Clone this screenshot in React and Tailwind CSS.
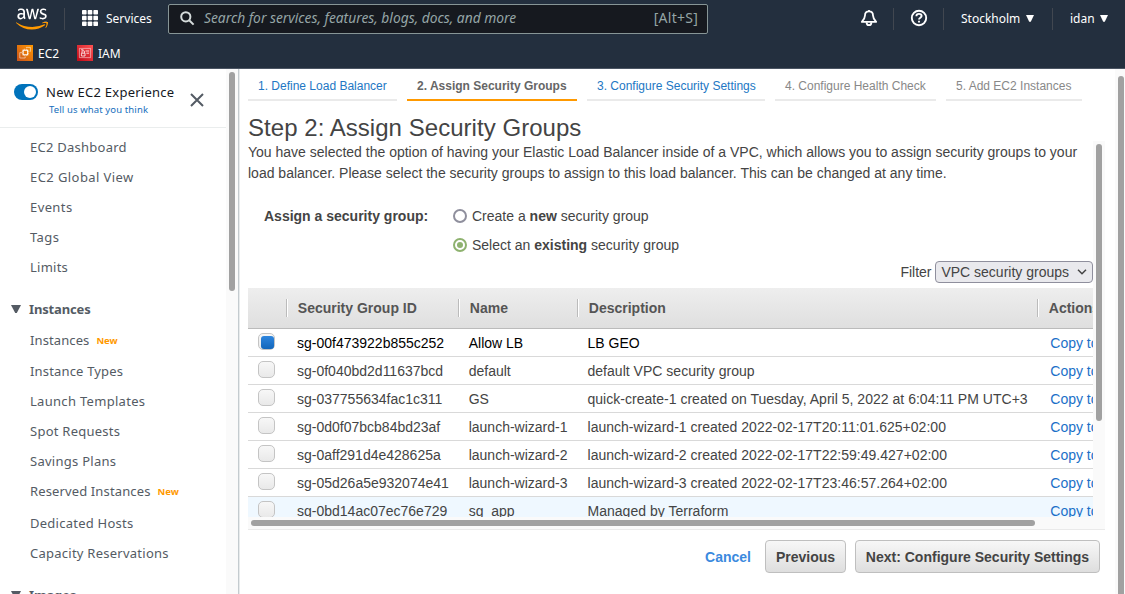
import React from "react";
import { FaAws } from "react-icons/fa";

const ember = "font-['Noto_Sans','Open_Sans',sans-serif]";

function Divider() {
  return <div className="h-[22px] w-px bg-[#414750]" />;
}

function Caret() {
  return (
    <svg className="-mt-px" width="8" height="7" viewBox="0 0 8 7" fill="#fff">
      <path d="M0 0H8L4.8 6.8H3.2Z" />
    </svg>
  );
}

function AwsLogo() {
  return (
    <div className="flex h-[26px] w-[33px] items-center justify-center">
      <svg width="0" height="0" className="absolute">
        <linearGradient id="awsFill" gradientUnits="userSpaceOnUse" x1="0" y1="0" x2="0" y2="512">
          <stop offset="0.605" stopColor="#fff" />
          <stop offset="0.605" stopColor="#ff9900" />
        </linearGradient>
      </svg>
      <FaAws size={32} className="h-[28px] w-[32px]" fill="url(#awsFill)" preserveAspectRatio="none" />
    </div>
  );
}

function TopBar() {
  return (
    <header className={`h-[69px] shrink-0 border-b border-[#4b5563] bg-[#232f3e] text-white ${ember}`}>
      <div className="flex h-[37px] items-center">
        <div className="ml-[15px] w-[33px]">
          <AwsLogo />
        </div>
        <div className="ml-4">
          <Divider />
        </div>
        <svg className="-mt-px ml-[17px]" width="16" height="16" viewBox="0 0 16 16" fill="#fff">
          {[0, 5.7, 11.4].map((y) =>
            [0, 5.7, 11.4].map((x) => <rect key={`${x}-${y}`} x={x} y={y} width="4.6" height="4.6" rx="0.8" />)
          )}
        </svg>
        <div className="ml-2 mt-px w-[62px] text-[12px] leading-4">Services</div>
        <div className="flex h-[30px] w-[540px] items-center rounded-[2px] border border-[#879596] bg-[#16191f] text-[#95a5a6]">
          <svg className="ml-[11px]" width="15" height="15" viewBox="0 0 15 15" fill="none" stroke="#d5dbdb" strokeWidth="2">
            <circle cx="5.8" cy="5.8" r="4.6" />
            <path d="M9.2 9.2L13.6 13.6" />
          </svg>
          <div className="-mt-px ml-[9px] flex-1 text-[13.8px] italic leading-4">
            Search for services, features, blogs, docs, and more
          </div>
          <div className="-mt-px mr-[9px] text-[14px] leading-4 tracking-[0.25px]">[Alt+S]</div>
        </div>
        <svg className="-mt-px ml-[152px]" width="18" height="18" viewBox="0 0 18 18" fill="none" stroke="#fff" strokeWidth="1.8">
          <path d="M9 1V2.4M9 2.4C6.2 2.4 5 4.4 5 6.6C5 9.6 4 10.6 1.8 12.8H16.2C14 10.6 13 9.6 13 6.6C13 4.4 11.8 2.4 9 2.4Z" strokeLinejoin="round" />
          <path d="M6.6 13.2C6.6 15 7.6 16.2 9 16.2S11.4 15 11.4 13.2" />
        </svg>
        <div className="ml-[15px]">
          <Divider />
        </div>
        <svg className="-mt-px ml-4" width="18" height="18" viewBox="0 0 18 18" fill="none" stroke="#fff" strokeWidth="1.9">
          <circle cx="9" cy="9" r="7.2" />
          <path d="M6.4 7.2C6.4 5.7 7.4 4.9 9 4.9S11.6 5.8 11.6 7.1C11.6 8.7 9 8.7 9 10.6" />
          <path d="M9 11.8V13.6" />
        </svg>
        <div className="ml-[15px]">
          <Divider />
        </div>
        <div className="ml-[17px] mt-px w-[65px] text-[12px] leading-4">Stockholm</div>
        <Caret />
        <div className="ml-[18px]">
          <Divider />
        </div>
        <div className="ml-[17px] mt-px w-[30px] text-[12px] leading-4">idan</div>
        <Caret />
      </div>
      <div className="flex h-8 items-center text-[12px] leading-4">
        <svg className="ml-[17px]" width="16" height="16" viewBox="0 0 16 16" fill="none" stroke="#fff" strokeWidth="0.8">
          <defs>
            <linearGradient id="ec2" x1="0" y1="1" x2="1" y2="0">
              <stop offset="0" stopColor="#c8511b" />
              <stop offset="1" stopColor="#ff9900" />
            </linearGradient>
          </defs>
          <rect width="16" height="16" fill="url(#ec2)" stroke="none" />
          <rect x="6.1" y="5.2" width="4.6" height="4.6" strokeWidth="1.1" />
          <path d="M7.4 5V3.6M9.4 5V3.6M7.4 11.2V10M9.4 11.2V10M4.8 6.4H6M4.8 8.4H6M10.8 6.4H12M10.8 8.4H12" opacity="0.5" />
          <path d="M5 7.6H2.8V13H8.2V11.4M9.4 3V2.4H13.4V6.4H12.6" opacity="0.65" />
        </svg>
        <div className="ml-[5px] mt-0.5 w-[39px]">EC2</div>
        <svg width="16" height="16" viewBox="0 0 16 16" fill="none" stroke="#fff" strokeWidth="0.8">
          <defs>
            <linearGradient id="iam" x1="0" y1="1" x2="1" y2="0">
              <stop offset="0" stopColor="#bd0816" />
              <stop offset="1" stopColor="#ff5252" />
            </linearGradient>
          </defs>
          <rect width="16" height="16" fill="url(#iam)" stroke="none" />
          <path d="M2.4 3.4H13.6V12.6H2.4Z" opacity="0.6" />
          <path d="M4.4 8.2H8V11H4.4ZM5 8V6.2C5 5.6 7.4 5.6 7.4 6.2V8M8.6 6H12M9.4 8.2H12M4 4.8H6.4" />
        </svg>
        <div className="ml-[5px] mt-0.5">IAM</div>
      </div>
    </header>
  );
}

function NavItem({ label, isNew, className = "h-[30px]", spacing = "tracking-[0.25px]" }) {
  return (
    <div className={`flex items-center pl-[30px] ${className}`}>
      <span className={spacing}>{label}</span>
      {isNew && <span className="ml-[7px] pt-0.5 text-[9.5px] font-bold text-[#ff9900]">New</span>}
    </div>
  );
}

function NavHeading({ label }) {
  return (
    <div className="flex h-[30px] items-center pl-[11px] font-bold">
      <svg width="10" height="8" viewBox="0 0 10 8" fill="#545b64">
        <path d="M0 0H10L5.8 8H4.2Z" />
      </svg>
      <span className="ml-2 tracking-[-0.15px]">{label}</span>
    </div>
  );
}

function Sidebar() {
  return (
    <aside className={`flex h-full w-[240px] shrink-0 overflow-hidden ${ember}`}>
      <div className="w-[226px] shrink-0">
        <div className="flex h-[59px] border-b border-[#eaeded]">
          <div className="ml-[14px] mt-[15px] flex h-4 w-6 items-center justify-end rounded-full bg-[#0073bb] pr-0.5">
            <div className="h-3 w-3 rounded-full bg-white" />
          </div>
          <div className="ml-2 mt-[14px] w-[144px] whitespace-nowrap">
            <div className="text-[13px] leading-[18px] tracking-[0.25px] text-[#16191f]">New EC2 Experience</div>
            <div className="ml-[3px] mt-px text-[9.5px] leading-4 tracking-[0.12px] text-[#146ebd]">Tell us what you think</div>
          </div>
          <svg className="mt-[24px]" width="14" height="14" viewBox="0 0 14 14" stroke="#545b64" strokeWidth="2">
            <path d="M1 1L13 13M13 1L1 13" />
          </svg>
        </div>
        <nav className="whitespace-nowrap pt-1 text-[13px] leading-5 text-[#545b64]">
          <NavItem label="EC2 Dashboard" />
          <NavItem label="EC2 Global View" spacing="tracking-[0.42px]" />
          <NavItem label="Events" spacing="tracking-[0.4px]" />
          <NavItem label="Tags" spacing="tracking-[0.4px]" />
          <NavItem label="Limits" />
          <div className="h-3" />
          <NavHeading label="Instances" />
          <NavItem label="Instances" isNew spacing="tracking-[0.1px]" className="h-[32px]" />
          <NavItem label="Instance Types" spacing="tracking-[0.17px]" />
          <NavItem label="Launch Templates" spacing="tracking-[0.3px]" />
          <NavItem label="Spot Requests" />
          <NavItem label="Savings Plans" spacing="tracking-[0.27px]" />
          <NavItem label="Reserved Instances" isNew spacing="tracking-[0.13px]" />
          <NavItem label="Dedicated Hosts" className="h-[34px]" />
          <NavItem label="Capacity Reservations" className="h-[26px]" />
          <div className="h-[14px]" />
          <NavHeading label="Images" />
        </nav>
      </div>
      <div className="w-3 shrink-0 bg-[#fafafa] pl-[3px] pt-[3px]">
        <div className="h-[219px] w-1.5 rounded-full bg-[#a1a1a1]" />
      </div>
      <div className="w-px bg-[#c4cbcf]" />
      <div className="w-px bg-[#e8ebec]" />
    </aside>
  );
}

const steps = [
  { label: "1. Define Load Balancer", style: "w-[149px] border-[#eaeaea] text-[#2277c4]" },
  { label: "2. Assign Security Groups", style: "w-[170px] border-[#ff9900] font-bold text-[#666]" },
  { label: "3. Configure Security Settings", style: "w-[178px] border-[#eaeaea] text-[#2277c4]" },
  { label: "4. Configure Health Check", style: "w-[161px] border-[#eaeaea] text-[#888]" },
  { label: "5. Add EC2 Instances", style: "w-[136px] border-[#eaeaea] text-[#888]" },
];

const groups = [
  { id: "sg-00f473922b855c252", name: "Allow LB", description: "LB GEO", checked: true },
  { id: "sg-0f040bd2d11637bcd", name: "default", description: "default VPC security group" },
  { id: "sg-037755634fac1c311", name: "GS", description: "quick-create-1 created on Tuesday, April 5, 2022 at 6:04:11 PM UTC+3" },
  { id: "sg-0d0f07bcb84bd23af", name: "launch-wizard-1", description: "launch-wizard-1 created 2022-02-17T20:11:01.625+02:00" },
  { id: "sg-0aff291d4e428625a", name: "launch-wizard-2", description: "launch-wizard-2 created 2022-02-17T22:59:49.427+02:00" },
  { id: "sg-05d26a5e932074e41", name: "launch-wizard-3", description: "launch-wizard-3 created 2022-02-17T23:46:57.264+02:00" },
  { id: "sg-0bd14ac07ec76e729", name: "sg_app", description: "Managed by Terraform", hovered: true },
];

const columns = "grid grid-cols-[38px_172px_119px_460px_120px]";

function HeadCell({ children }) {
  return (
    <div className="flex h-[18px] items-center border-l border-[#bbb]">
      <div className="h-[18px] w-px bg-white" />
      <span className="pl-[9.8px]">{children}</span>
    </div>
  );
}

function Checkbox({ checked }) {
  return (
    <div className="ml-[10px] mt-1 h-[17px] w-[17px] rounded-[5px] border border-[#c4c4c4] bg-linear-to-b from-[#f7f7f7] to-[#e9e9e9] pl-0.5 pt-0.5">
      {checked && <div className="h-[13px] w-[13px] rounded-[3px] bg-linear-to-b from-[#2e86de] to-[#1166bb]" />}
    </div>
  );
}

function GroupTable() {
  return (
    <div className="h-[229px] w-[845px] overflow-hidden whitespace-nowrap">
      <div className={`${columns} h-[41px] w-[909px] items-center border-b border-[#bbb] bg-linear-to-b from-[#eeeeee] to-[#dfdfdf] font-bold text-[#555]`}>
        <div />
        <HeadCell>Security Group ID</HeadCell>
        <HeadCell>Name</HeadCell>
        <HeadCell>Description</HeadCell>
        <HeadCell>Actions</HeadCell>
      </div>
      {groups.map((g) => (
        <div
          key={g.id}
          className={`${columns} h-7 w-[909px] border-b border-[#d9d9d9] leading-7 ${g.checked ? "text-black" : "text-[#444]"} ${g.hovered ? "bg-[#eff8ff]" : ""}`}
        >
          <Checkbox checked={g.checked} />
          <span className="pl-[11px]">{g.id}</span>
          <span className="pl-[10.7px]">{g.name}</span>
          <span className="pl-[10.5px] tracking-[0.02px]">{g.description}</span>
          <span className="pl-[13.3px] text-[#1a70c8]">Copy to new</span>
        </div>
      ))}
    </div>
  );
}

function Radio({ checked }) {
  return checked ? (
    <div className="mb-0.5 flex h-[14px] w-[14px] items-center justify-center rounded-full border-2 border-[#8eb26f]">
      <div className="h-1.5 w-1.5 rounded-full bg-[#8eb26f]" />
    </div>
  ) : (
    <div className="mb-0.5 h-[14px] w-[14px] rounded-full border-2 border-[#8f8f9d]" />
  );
}

function Wizard() {
  return (
    <main className="flex min-w-0 flex-1 flex-col pl-2 font-['Liberation_Sans',Arial,sans-serif] text-[14px] text-[#444]">
      <div className="flex h-8 shrink-0 gap-[10px] whitespace-nowrap text-[12px]">
        {steps.map((s) => (
          <div key={s.label} className={`border-b-2 pl-[10px] pt-[9px] leading-4 ${s.style}`}>
            {s.label}
          </div>
        ))}
      </div>
      <div className="flex h-[429px] w-[857px] shrink-0 border-b border-[#eaeaea]">
        <div className="w-[845px]">
          <h1 className="mt-[13px] h-7 text-[24px] leading-7 tracking-[0.04px]">Step 2: Assign Security Groups</h1>
          <p className="h-[42px] w-[845px] leading-[21px]">
            You have selected the option of having your Elastic Load Balancer inside of a VPC, which allows you to assign
            security groups to your load balancer. Please select the security groups to assign to this load balancer. This
            can be changed at any time.
          </p>
          <div className="flex pl-4 pt-[18px]">
            <div className="w-[189px] font-bold leading-[29px]">Assign a security group:</div>
            <div>
              <div className="flex h-[29px] items-center">
                <Radio />
                <span className="ml-[5px]">
                  Create a <b>new</b> security group
                </span>
              </div>
              <div className="flex h-[29px] items-center">
                <Radio checked />
                <span className="ml-[5px]">
                  Select an <b>existing</b> security group
                </span>
              </div>
            </div>
          </div>
          <div className="flex h-[28px] items-start justify-end pt-[1px]">
            <span className="mr-[3.5px] leading-[22px]">Filter</span>
            <div className="flex h-[22px] w-[158px] items-center rounded-[4px] border border-[#8f8f9d] bg-[#e9e9ed] pl-[5.4px]">
              <span className="flex-1 whitespace-nowrap leading-5">VPC security groups</span>
              <svg className="mr-[5px]" width="10" height="6" viewBox="0 0 10 6" fill="none" stroke="#444" strokeWidth="1.5">
                <path d="M1 0.8L5 4.8L9 0.8" />
              </svg>
            </div>
          </div>
          <GroupTable />
          <div className="h-3 bg-[#fafafa] pl-[3px] pt-[3px]">
            <div className="h-1.5 w-[784px] rounded-full bg-[#a1a1a1]" />
          </div>
        </div>
        <div className="mt-10 w-3 bg-[#fafafa] pl-[3px] pt-[3px]">
          <div className="h-[277px] w-1.5 rounded-full bg-[#a1a1a1]" />
        </div>
      </div>
      <div className="flex w-[852px] items-center justify-end pt-[10px] font-bold">
        <span className="mr-[14px] pt-px text-[#3b8ade]">Cancel</span>
        <button className="mr-[9px] h-[33px] w-[81px] rounded-[4px] border border-[#bfbfbf] bg-linear-to-b from-[#f7f7f7] to-[#dedede] pt-px">
          Previous
        </button>
        <button className="h-[33px] w-[245px] whitespace-nowrap rounded-[4px] border border-[#bfbfbf] bg-linear-to-b from-[#f7f7f7] to-[#dedede] pt-px">
          Next: Configure Security Settings
        </button>
      </div>
    </main>
  );
}

export default function App() {
  return (
    <div className="flex h-[594px] w-[1125px] flex-col overflow-hidden bg-white">
      <TopBar />
      <div className="flex min-h-0 flex-1">
        <Sidebar />
        <Wizard />
        <div className="w-[10px] shrink-0 bg-[#fafafa] pl-[3px] pt-[7px]">
          <div className="h-[540px] w-1.5 rounded-full bg-[#a1a1a1]" />
        </div>
      </div>
    </div>
  );
}
